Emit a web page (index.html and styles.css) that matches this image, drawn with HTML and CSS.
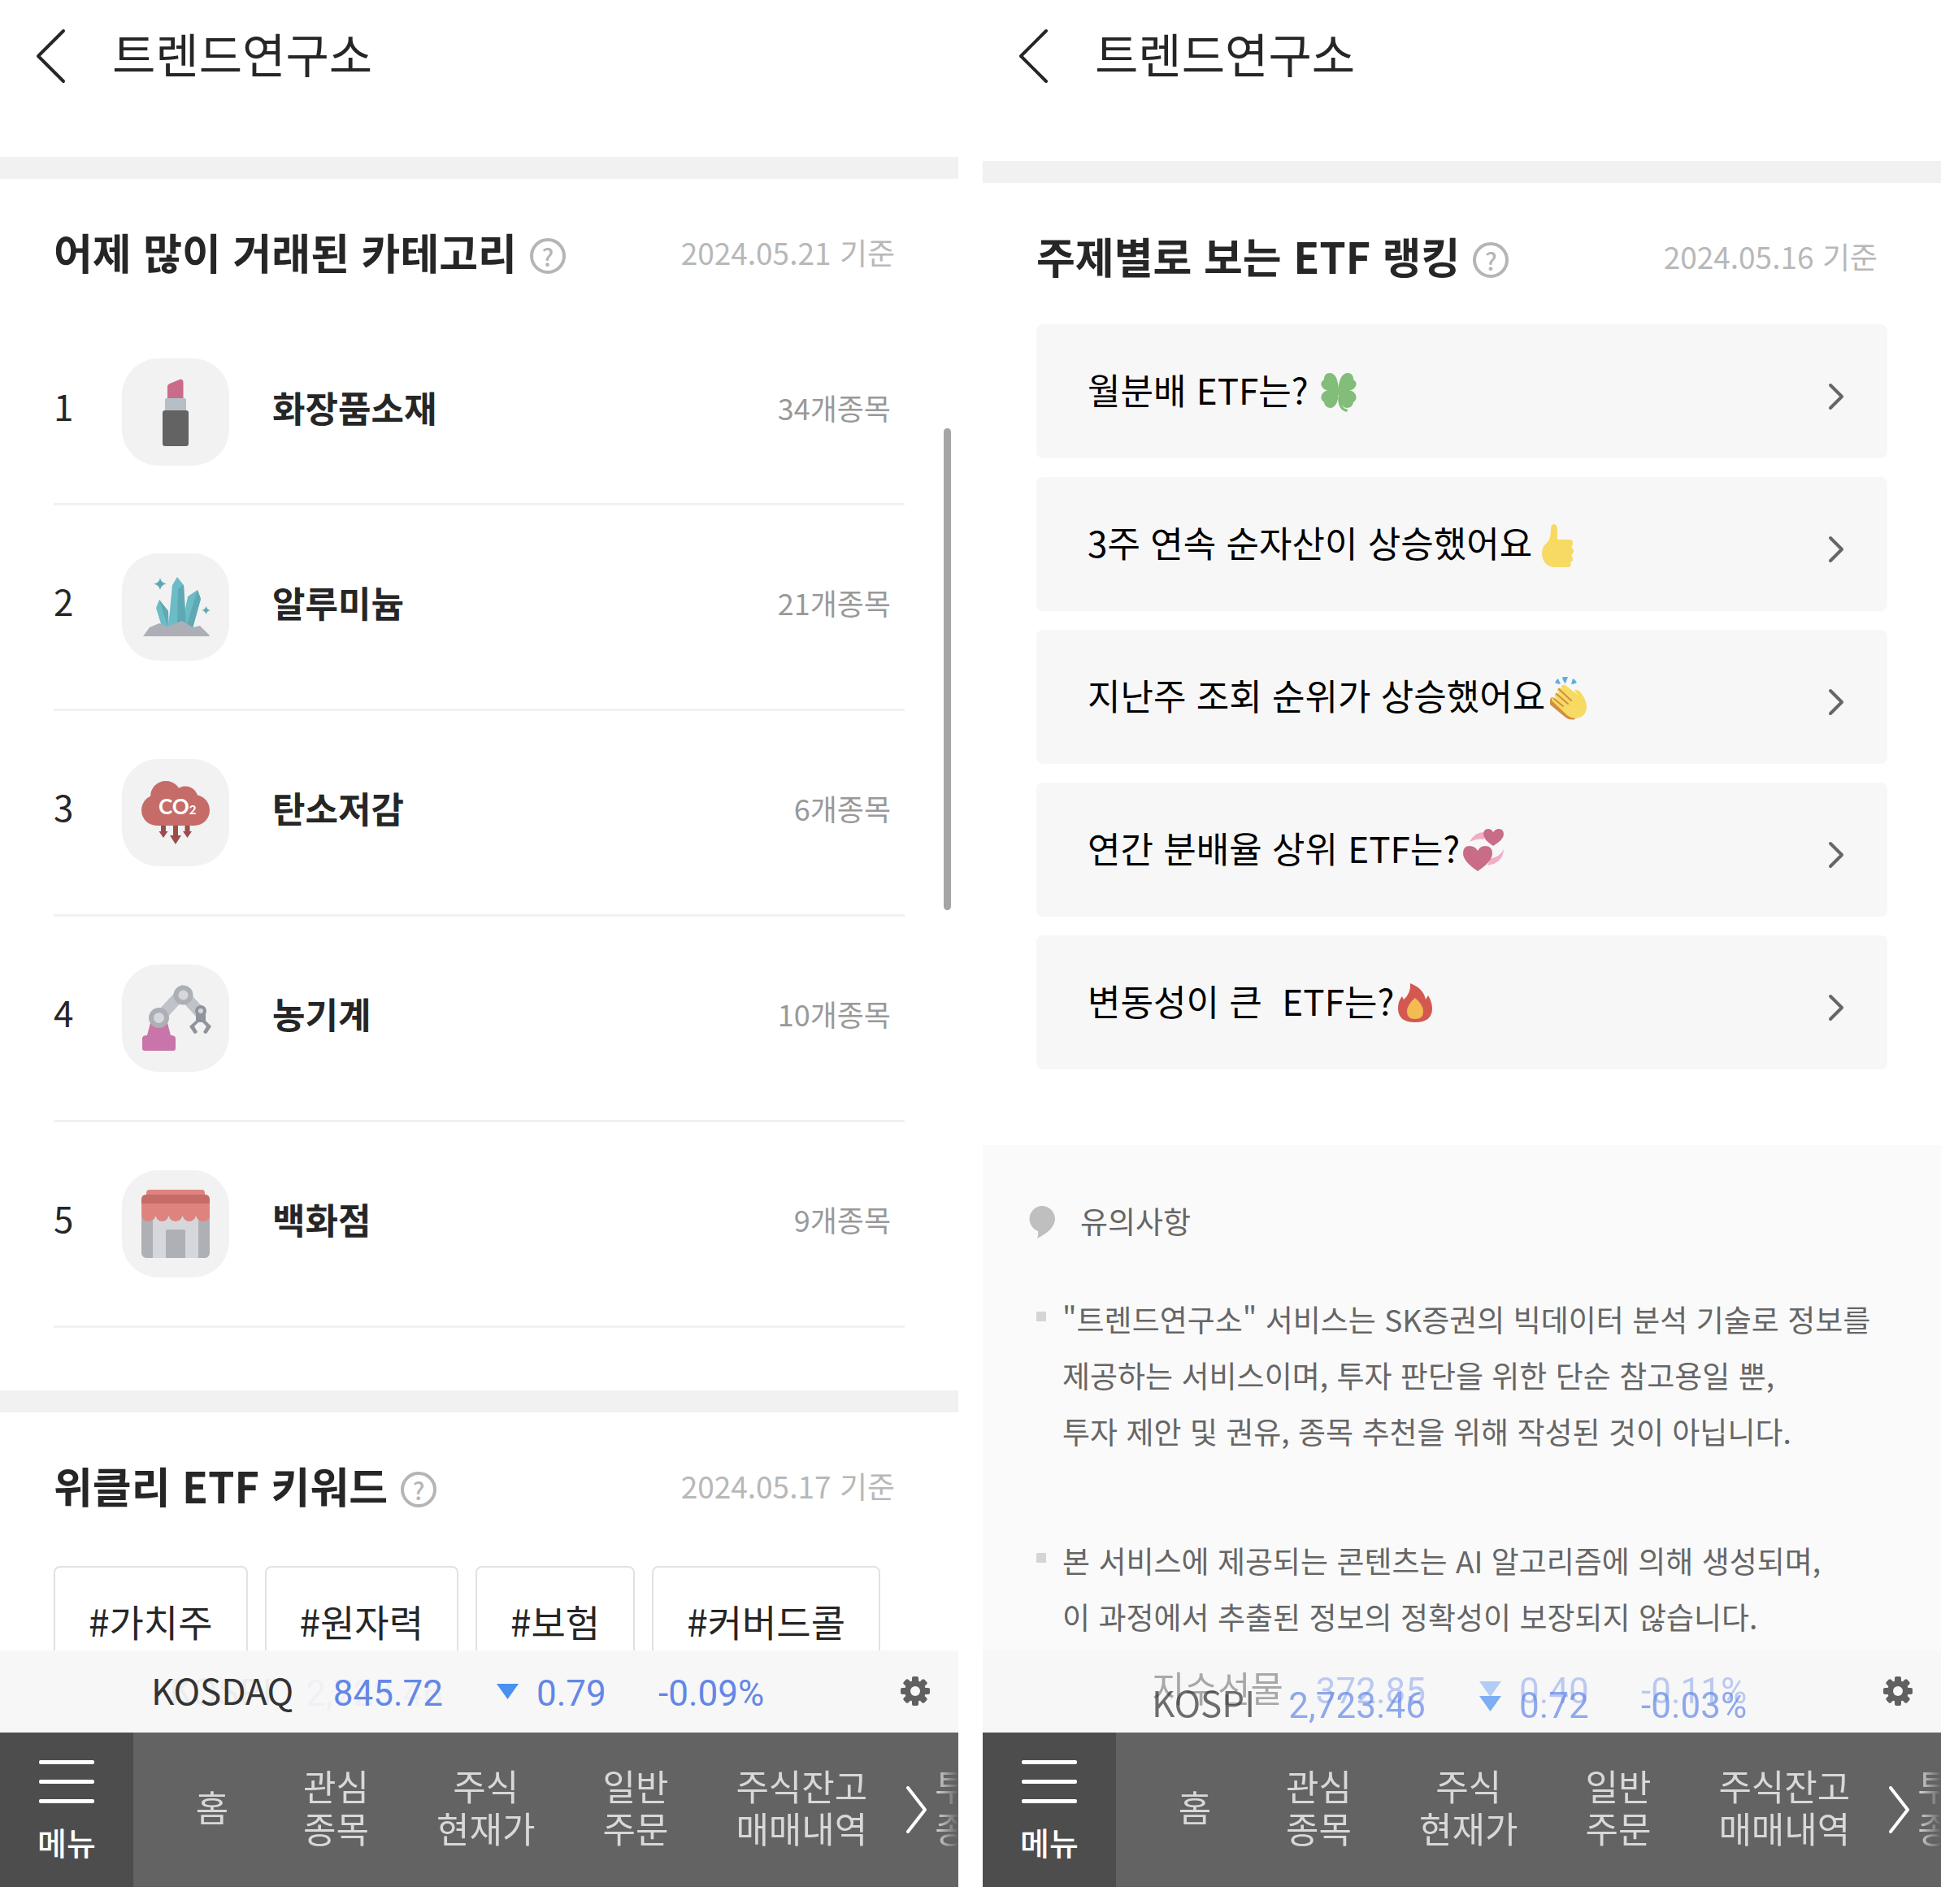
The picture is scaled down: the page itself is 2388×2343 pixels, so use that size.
FILE: index.html
```html
<!DOCTYPE html>
<html lang="ko">
<head>
    <meta charset="utf-8">
    <title>트렌드연구소</title>
    <link rel="stylesheet" href="styles.css">
</head>
<body>

    <svg class="sprite" aria-hidden="true">
        <symbol id="back" viewBox="0 0 38 68">
            <path d="M35 3L4 34l31 31" fill="none" stroke="#262626" stroke-width="4" stroke-linecap="round" stroke-linejoin="round" />
        </symbol>
        <symbol id="chevron" viewBox="0 0 20 34">
            <path d="M3 3l14 14L3 31" fill="none" stroke="#666" stroke-width="4" stroke-linecap="round" stroke-linejoin="round" />
        </symbol>
        <symbol id="next" viewBox="0 0 26 58">
            <path d="M2 2l21 27L2 56" fill="none" stroke="#fff" stroke-width="4" stroke-linecap="round" stroke-linejoin="round" />
        </symbol>
        <symbol id="gear" viewBox="0 0 36 36">
            <g fill="#606060">
                <circle cx="18" cy="18" r="13" />
                <rect x="14" y="0" width="8" height="36" rx="2" />
                <rect x="14" y="0" width="8" height="36" rx="2" transform="rotate(45 18 18)" />
                <rect x="14" y="0" width="8" height="36" rx="2" transform="rotate(90 18 18)" />
                <rect x="14" y="0" width="8" height="36" rx="2" transform="rotate(135 18 18)" />
            </g>
            <circle cx="18" cy="18" r="6" fill="#f7f7f7" />
        </symbol>
    </svg>

    <div class="app">

        <div class="screen">
            <header class="top-bar">
                <button class="back-btn" aria-label="뒤로"><svg><use href="#back" /></svg></button>
                <h1>트렌드연구소</h1>
            </header>

            <main class="content">
                <section class="section">
                    <div class="section-head">
                        <h2>어제 많이 거래된 카테고리</h2>
                        <button class="help" aria-label="도움말">?</button>
                        <span class="date">2024.05.21 기준</span>
                    </div>
                    <ol class="rank-list">
                        <li>
                            <span class="no">1</span>
                            <svg class="thumb" viewBox="0 0 132 132">
                                <path d="M56 50V35q0-3 3-4l12-5q4-1 4.500 3V50z" fill="#c96c87" />
                                <rect x="53" y="49" width="26" height="17" rx="2" fill="#b5bfc6" />
                                <rect x="50" y="64" width="32" height="44" rx="3" fill="#636363" />
                            </svg>
                            <span class="name">화장품소재</span>
                            <span class="count">34개종목</span>
                        </li>
                        <li>
                            <span class="no">2</span>
                            <svg class="thumb" viewBox="0 0 132 132">
                                <path d="M46 57l-4 10 7 23h9l-1-19z" fill="#6cbcc6" />
                                <path d="M46 57l11 14-1 19z" fill="#5fa9b4" />
                                <path d="M93 45L81 53l-7 36 13 3 10-36z" fill="#6cbcc6" />
                                <path d="M93 45l4 11-10 36-8-2z" fill="#5fa9b4" />
                                <path d="M68 29l-6 10-5 52h22l-3-52z" fill="#6cbcc6" />
                                <path d="M76 39l-7 5-1 44 11 2z" fill="#5fa9b4" />
                                <path d="M47 30q1 6 8 7.500-7 1-8 7.500-1-6-8-7.500 7-1 8-7.500z" fill="#5fa9b4" />
                                <path d="M103.500 65q1 4 5 5-4 1-5 5-1-4-5-5 4-1 5-5z" fill="#5fa9b4" />
                                <path d="M26 102l8-11 12-5 10 4 18-7 13 8 9-2 12 12q0 1-2 1H28q-2 0-2-2z" fill="#acb0b6" />
                            </svg>
                            <span class="name">알루미늄</span>
                            <span class="count">21개종목</span>
                        </li>
                        <li>
                            <span class="no">3</span>
                            <svg class="thumb" viewBox="0 0 132 132">
                                <g fill="#9c4d4b">
                                    <path d="M48 80h6v9h2.500L51 97l-5.500-8H48z" />
                                    <path d="M63 80h6v14h4l-7 11-7-11h4z" />
                                    <path d="M77.500 80h6v9H86l-5.500 8-5.500-8h2.500z" />
                                </g>
                                <g fill="#c56c69">
                                    <circle cx="54" cy="46" r="19" />
                                    <circle cx="78" cy="49" r="15.500" />
                                    <rect x="24" y="44" width="84" height="38" rx="19" />
                                </g>
                                <text x="45" y="68" class="co2">CO<tspan class="co2-sub">2</tspan></text>
                            </svg>
                            <span class="name">탄소저감</span>
                            <span class="count">6개종목</span>
                        </li>
                        <li>
                            <span class="no">4</span>
                            <svg class="thumb" viewBox="0 0 132 132">
                                <path d="M36 68h19l5 19q6 0 6 4v12q0 3-3 3H28q-3 0-3-3V91q0-4 6-4z" fill="#c975a9" />
                                <path d="M48 63l26-28 22 24" fill="none" stroke="#bfc3c9" stroke-width="14" />
                                <circle cx="75.500" cy="37.500" r="9" fill="#d5d7dc" stroke="#acb0b5" stroke-width="6" />
                                <circle cx="45.500" cy="65.500" r="9.500" fill="#d5d7dc" stroke="#acb0b5" stroke-width="6" />
                                <path d="M91 57h12v12l7 7-6 9q-3 0-4-2l4-7-5-5h-5l-5 5 4 7q-1 2-4 2l-6-9 8-7z" fill="#8e949a" />
                                <circle cx="97" cy="57" r="5" fill="#d5d7dc" stroke="#8e949a" stroke-width="4" />
                            </svg>
                            <span class="name">농기계</span>
                            <span class="count">10개종목</span>
                        </li>
                        <li>
                            <span class="no">5</span>
                            <svg class="thumb" viewBox="0 0 132 132">
                                <rect x="24" y="40" width="84" height="68" rx="6" fill="#adb1b6" />
                                <rect x="38" y="50" width="56" height="58" fill="#d5d7dc" />
                                <path d="M54 108V75q0-2 2-2h20q2 0 2 2v33z" fill="#adb1b6" />
                                <path d="M30 32v-4q0-4 4-4h64q4 0 4 4v4z" fill="#df837f" />
                                <path d="M24 40h84v15q0 8-8 8-7 0-9-7-2 7-8 7t-8.500-7q-2 7-8.500 7t-8.500-7q-2 7-8 7t-8-7q-2 7-9 7-8 0-8-8z" fill="#df837f" />
                                <path d="M24 41v-5q0-6 6-6h72q6 0 6 6v5z" fill="#c56c69" />
                            </svg>
                            <span class="name">백화점</span>
                            <span class="count">9개종목</span>
                        </li>
                    </ol>
                </section>

                <section class="section">
                    <div class="section-head">
                        <h2>위클리 ETF 키워드</h2>
                        <button class="help" aria-label="도움말">?</button>
                        <span class="date">2024.05.17 기준</span>
                    </div>
                    <div class="keywords">
                        <button>#가치주</button>
                        <button>#원자력</button>
                        <button>#보험</button>
                        <button>#커버드콜</button>
                    </div>
                </section>
            </main>

            <div class="scroll-thumb"></div>

            <div class="ticker">
                <div class="quote ghost">
                    <span class="q-name">KOSPI</span><span class="q-value">2,723.46</span><span class="down"></span><span></span><span></span>
                </div>
                <div class="quote current">
                    <span class="q-name">KOSDAQ</span><span class="q-value">845.72</span><span class="down"></span><span>0.79</span><span>-0.09%</span>
                </div>
                <button class="gear" aria-label="설정"><svg><use href="#gear" /></svg></button>
            </div>

            <nav class="nav">
                <button class="menu-btn"><i></i><i></i><i></i>메뉴</button>
                <div class="nav-items">
                    <a href="#">홈</a>
                    <a href="#">관심<br>종목</a>
                    <a href="#">주식<br>현재가</a>
                    <a href="#">일반<br>주문</a>
                    <a href="#">주식잔고<br>매매내역</a>
                    <a href="#">투<br>종</a>
                </div>
                <button class="next-btn" aria-label="다음"><svg><use href="#next" /></svg></button>
            </nav>
        </div>

        <div class="screen">
            <header class="top-bar">
                <button class="back-btn" aria-label="뒤로"><svg><use href="#back" /></svg></button>
                <h1>트렌드연구소</h1>
            </header>

            <main class="content content-etf">
                <section class="section">
                    <div class="section-head">
                        <h2>주제별로 보는 ETF 랭킹</h2>
                        <button class="help" aria-label="도움말">?</button>
                        <span class="date">2024.05.16 기준</span>
                    </div>
                    <div class="topics">
                        <a href="#">
                            월분배 ETF는?
                            <svg class="emoji spaced" viewBox="0 0 52 56">
                                <g fill="#82bd79">
                                    <path d="M25 26Q7 28 4 20q-2-5 3-8 0-8 7-8 10 0 11 22z" />
                                    <path d="M24 26Q26 4 36 4q7 0 7 8 5 3 3 8-3 8-22 6z" />
                                    <path d="M25 24Q7 23 4 31q-2 6 3 9 1 7 8 7 10-1 10-23z" />
                                    <path d="M24 24q19-1 22 7 2 6-3 9-1 7-8 7-10-1-11-23z" />
                                    <path d="M24 34q0 14 8 17 4 2 4-1 0-2-3-2-5-2-6-14z" />
                                </g>
                            </svg>
                            <svg class="arrow"><use href="#chevron" /></svg>
                        </a>
                        <a href="#">
                            3주 연속 순자산이 상승했어요
                            <svg class="emoji spaced" viewBox="0 0 52 56">
                                <path d="M15 2q4 1 4 6v13h15q4 0 4 4t-2 5q3 2 3 5t-3 5q2 2 2 5t-3 4q2 6-3 6H14Q1 53 0 38q0-8 6-13 5-4 5-17 0-6 4-6z" fill="#f7da64" />
                            </svg>
                            <svg class="arrow"><use href="#chevron" /></svg>
                        </a>
                        <a href="#">
                            지난주 조회 순위가 상승했어요
                            <svg class="emoji" viewBox="0 0 52 56">
                                <path d="M9 9q2-4 4-5l3 7q-4 0-7-2zM18 2h7l-3 8q-3-2-4-8zM31 4q3 1 5 5-3 2-7 2z" fill="#62ace0" />
                                <path d="M7 27q-4 0-4 4v5l18 15q6 5 13 3l-4-12z" fill="#cf8f3f" />
                                <path d="M17 13q3-3 6 0l14 11-3-4q-2-3 1-2 4 0 7 5 6 8 6 16 0 7-5 11-8 6-18 0L7 33q-4-4-1-5 1-2 5 1-4-5-1-7 1-2 5 1-5-5-2-7 2-2 6 1-3-3-2-4z" fill="#f7da64" />
                                <path d="M8 29l11 9M11 23l14 12M14 17l15 14" stroke="#cf8f3f" stroke-width="2" stroke-linecap="round" fill="none" />
                            </svg>
                            <svg class="arrow"><use href="#chevron" /></svg>
                        </a>
                        <a href="#">
                            연간 분배율 상위 ETF는?
                            <svg class="emoji" viewBox="0 0 52 56">
                                <path d="M9 17Q15 5 27 5q-1 6 0 9-8-2-18 3zM51 26q-1 17-20 20 2-4 3-8 13-3 17-12z" fill="#f1adc4" />
                                <path d="M38 22Q26 14 26 8q0-7 6-7 4 0 6 4 3-4 7-4 6 0 6 7 0 6-13 14z" fill="#c96c87" />
                                <path d="M19 53Q1 41 1 31q0-9 8-9 7 0 10 6 3-6 9-6 9 0 9 9 0 10-18 22z" fill="#c96c87" />
                            </svg>
                            <svg class="arrow"><use href="#chevron" /></svg>
                        </a>
                        <a href="#">
                            변동성이 큰&nbsp; ETF는?
                            <svg class="emoji" viewBox="0 0 52 56">
                                <path d="M17 3q16 6 19 20l3-5q5 8 5 16 0 17-21 17T2 34q0-9 5-15l2 4q9-8 8-20z" fill="#d35850" />
                                <path d="M23 21q10 8 10 17 0 9-10 9t-10-9q0-9 10-17z" fill="#f3bc53" />
                            </svg>
                            <svg class="arrow"><use href="#chevron" /></svg>
                        </a>
                    </div>
                </section>

                <section class="notice">
                    <h3>
                        <svg viewBox="0 0 32 40"><path d="M16 0a16 16 0 0 1 16 16q0 13-22 24 2-5 1-9A16 16 0 0 1 16 0z" fill="#bfbfbf" /></svg>
                        유의사항
                    </h3>
                    <ul>
                        <li>"트렌드연구소" 서비스는 SK증권의 빅데이터 분석 기술로 정보를<br>제공하는 서비스이며, 투자 판단을 위한 단순 참고용일 뿐,<br>투자 제안 및 권유, 종목 추천을 위해 작성된 것이 아닙니다.</li>
                        <li>본 서비스에 제공되는 콘텐츠는 AI 알고리즘에 의해 생성되며,<br>이 과정에서 추출된 정보의 정확성이 보장되지 않습니다.</li>
                    </ul>
                </section>
            </main>

            <div class="ticker">
                <div class="quote leaving">
                    <span class="q-name">지수선물</span><span class="q-value">372.85</span><span class="down"></span><span>0.40</span><span>-0.11%</span>
                </div>
                <div class="quote entering">
                    <span class="q-name">KOSPI</span><span class="q-value">2,723.46</span><span class="down"></span><span>0.72</span><span>-0.03%</span>
                </div>
                <button class="gear" aria-label="설정"><svg><use href="#gear" /></svg></button>
            </div>

            <nav class="nav">
                <button class="menu-btn"><i></i><i></i><i></i>메뉴</button>
                <div class="nav-items">
                    <a href="#">홈</a>
                    <a href="#">관심<br>종목</a>
                    <a href="#">주식<br>현재가</a>
                    <a href="#">일반<br>주문</a>
                    <a href="#">주식잔고<br>매매내역</a>
                    <a href="#">투<br>종</a>
                </div>
                <button class="next-btn" aria-label="다음"><svg><use href="#next" /></svg></button>
            </nav>
        </div>

    </div>

</body>
</html>
```
FILE: styles.css
```css
* {
    box-sizing: border-box;
}

body {
    margin: 0;
    background: #fff;
    color: #262626;
    font-family: "Noto Sans CJK KR", sans-serif;
}

h1, h2, h3, ul, ol {
    margin: 0;
    padding: 0;
}

ul, ol {
    list-style: none;
}

a {
    color: inherit;
    text-decoration: none;
}

button {
    margin: 0;
    padding: 0;
    border: none;
    background: none;
    color: inherit;
    font-family: inherit;
    cursor: pointer;
}

svg {
    display: block;
    flex: none;
}

.sprite {
    position: absolute;
    width: 0;
    height: 0;
}

.app {
    display: grid;
    grid-template-columns: 1fr 1fr;
    gap: 30px;
    height: 100vh;
    padding-bottom: 21px;
}

.screen {
    position: relative;
    display: flex;
    flex-direction: column;
    min-width: 0;
    min-height: 0;
}

/* header */
.top-bar {
    display: flex;
    align-items: center;
    gap: 57px;
    height: 138px;
    padding-left: 43px;
}

    .top-bar h1 {
        font-size: 58px;
        font-weight: 400;
        line-height: 84px;
        padding-bottom: 8px;
    }

.back-btn svg {
    width: 38px;
    height: 68px;
}

.content {
    flex: 1;
    min-height: 0;
    padding-top: 55px;
    overflow: hidden;
    display: flex;
    flex-direction: column;
}

.content-etf {
    padding-top: 60px;
}

.section {
    flex: none;
    padding: 52px 66px 0;
    border-top: 27px solid #f1f1f1;
}

.section-head {
    display: flex;
    align-items: center;
    height: 76px;
    padding-right: 12px;
}

    .section-head h2 {
        font-size: 52px;
        font-weight: 700;
        line-height: 76px;
    }

.help {
    width: 44px;
    height: 44px;
    margin: 10px 0 0 16px;
    border: 4px solid #b5b5b5;
    border-radius: 50%;
    color: #b5b5b5;
    font-size: 30px;
    font-weight: 500;
    line-height: 34px;
}

.date {
    margin-left: auto;
    color: #b8b8b8;
    font-size: 37px;
    font-weight: 400;
}

/* category ranking */
.rank-list {
    padding-top: 34px;
    margin-bottom: 77px;
}

    .rank-list li {
        display: flex;
        align-items: center;
        padding: 59px 17px 59px 0;
        border-bottom: 3px solid #f1f1f1;
    }

        .rank-list li:first-child {
            padding-bottom: 46px;
        }

    .rank-list span {
        padding-bottom: 12px;
        line-height: 64px;
    }

    .rank-list .no {
        width: 84px;
        padding-bottom: 16px;
        font-size: 44px;
    }

    .rank-list .name {
        margin-left: 53px;
        font-size: 44px;
        font-weight: 700;
    }

    .rank-list .count {
        margin-left: auto;
        color: #999;
        font-size: 36px;
    }

.thumb {
    width: 132px;
    height: 132px;
    border-radius: 45px;
    background: #f2f2f2;
}

.co2 {
    fill: #fff;
    font-family: Lato, sans-serif;
    font-size: 26px;
    font-weight: 700;
}

.co2-sub {
    font-size: 15px;
}

.keywords {
    display: flex;
    gap: 21px;
    margin-top: 61px;
}

    .keywords button {
        height: 134px;
        padding: 0 41px;
        border: 2px solid #e2e2e2;
        border-radius: 8px;
        font-size: 46px;
        white-space: nowrap;
    }

.scroll-thumb {
    position: absolute;
    top: 527px;
    right: 9px;
    width: 9px;
    height: 593px;
    border-radius: 5px;
    background: #a5a5a5;
}

/* ETF topics */
.topics {
    display: flex;
    flex-direction: column;
    gap: 23px;
    margin-top: 46px;
}

    .topics a {
        display: flex;
        align-items: center;
        height: 165px;
        padding: 0 53px 6px 63px;
        border-radius: 8px;
        background: #f7f7f7;
        color: #000;
        font-size: 44px;
    }

.emoji {
    width: 52px;
    height: 56px;
    margin: 8px 0 0 3px;
}

    .emoji.spaced {
        margin-left: 12px;
    }

.arrow {
    width: 20px;
    height: 34px;
    margin: 18px 0 0 auto;
}

.notice {
    flex: 1 0 auto;
    margin-top: 93px;
    padding: 63px 57px 0;
    background: #fafafa;
    color: #666;
    font-size: 37px;
}

    .notice h3 {
        display: flex;
        align-items: center;
        gap: 31px;
        margin-bottom: 57px;
        font-size: 37px;
        font-weight: 400;
        line-height: 60px;
    }

        .notice h3 svg {
            width: 32px;
            height: 40px;
            margin-top: 4px;
        }

    .notice li {
        display: flex;
        gap: 20px;
        margin-bottom: 90px;
        padding-left: 9px;
        line-height: 69px;
        white-space: nowrap;
    }

        .notice li::before {
            content: "";
            flex: none;
            width: 12px;
            height: 12px;
            margin-top: 25px;
            background: #d5d5d5;
        }

/* index ticker, two quotes cross while rolling */
.ticker {
    position: relative;
    flex: none;
    height: 101px;
    overflow: hidden;
    background: #f7f7f7;
}

.quote {
    position: absolute;
    top: 0;
    left: 180px;
    display: grid;
    grid-template-columns: 196px 169px 115px 150px 150px;
    align-items: center;
    height: 105px;
    color: #6287e6;
    font-family: Roboto, sans-serif;
    font-size: 44px;
}

.q-name {
    padding: 0 0 10px 28px;
    color: #333;
    font-family: "Noto Sans CJK KR", sans-serif;
}

.current .q-name {
    padding-left: 6px;
}

.q-value {
    text-align: right;
}

.down {
    width: 27px;
    height: 19px;
    margin: 0 0 4px 66px;
    background: #4a90f0;
    clip-path: polygon(0 0, 100% 0, 50% 100%);
}

.ghost {
    opacity: 0.05;
}

.leaving {
    top: -3px;
    opacity: 0.4;
}

.entering {
    top: 15px;
    opacity: 0.7;
}

.gear {
    position: absolute;
    top: 32px;
    right: 35px;
}

    .gear svg {
        width: 36px;
        height: 36px;
    }

/* bottom navigation */
.nav {
    position: relative;
    flex: none;
    display: flex;
    height: 190px;
    overflow: hidden;
    background: #636363;
}

.menu-btn {
    flex: none;
    display: flex;
    flex-direction: column;
    align-items: center;
    width: 164px;
    padding-top: 34px;
    background: #4d4d4d;
    color: #fff;
    font-size: 39px;
    font-weight: 500;
    line-height: 56px;
}

    .menu-btn i {
        flex: none;
        width: 68px;
        height: 5px;
        margin-bottom: 19px;
        border-radius: 2px;
        background: #fff;
    }

.nav-items {
    flex: 1;
    min-width: 0;
    display: flex;
    align-items: center;
    gap: 83px;
    padding: 0 0 8px 68px;
    overflow: hidden;
    mask-image: linear-gradient(to left, transparent, #000 28px);
}

    .nav-items a {
        flex: none;
        min-width: 58px;
        color: #d8d8d8;
        font-size: 44px;
        line-height: 52px;
        text-align: center;
    }

        .nav-items a:last-child {
            min-width: 0;
        }

.next-btn {
    position: absolute;
    top: 66px;
    right: 38px;
}

    .next-btn svg {
        width: 26px;
        height: 58px;
    }
```
